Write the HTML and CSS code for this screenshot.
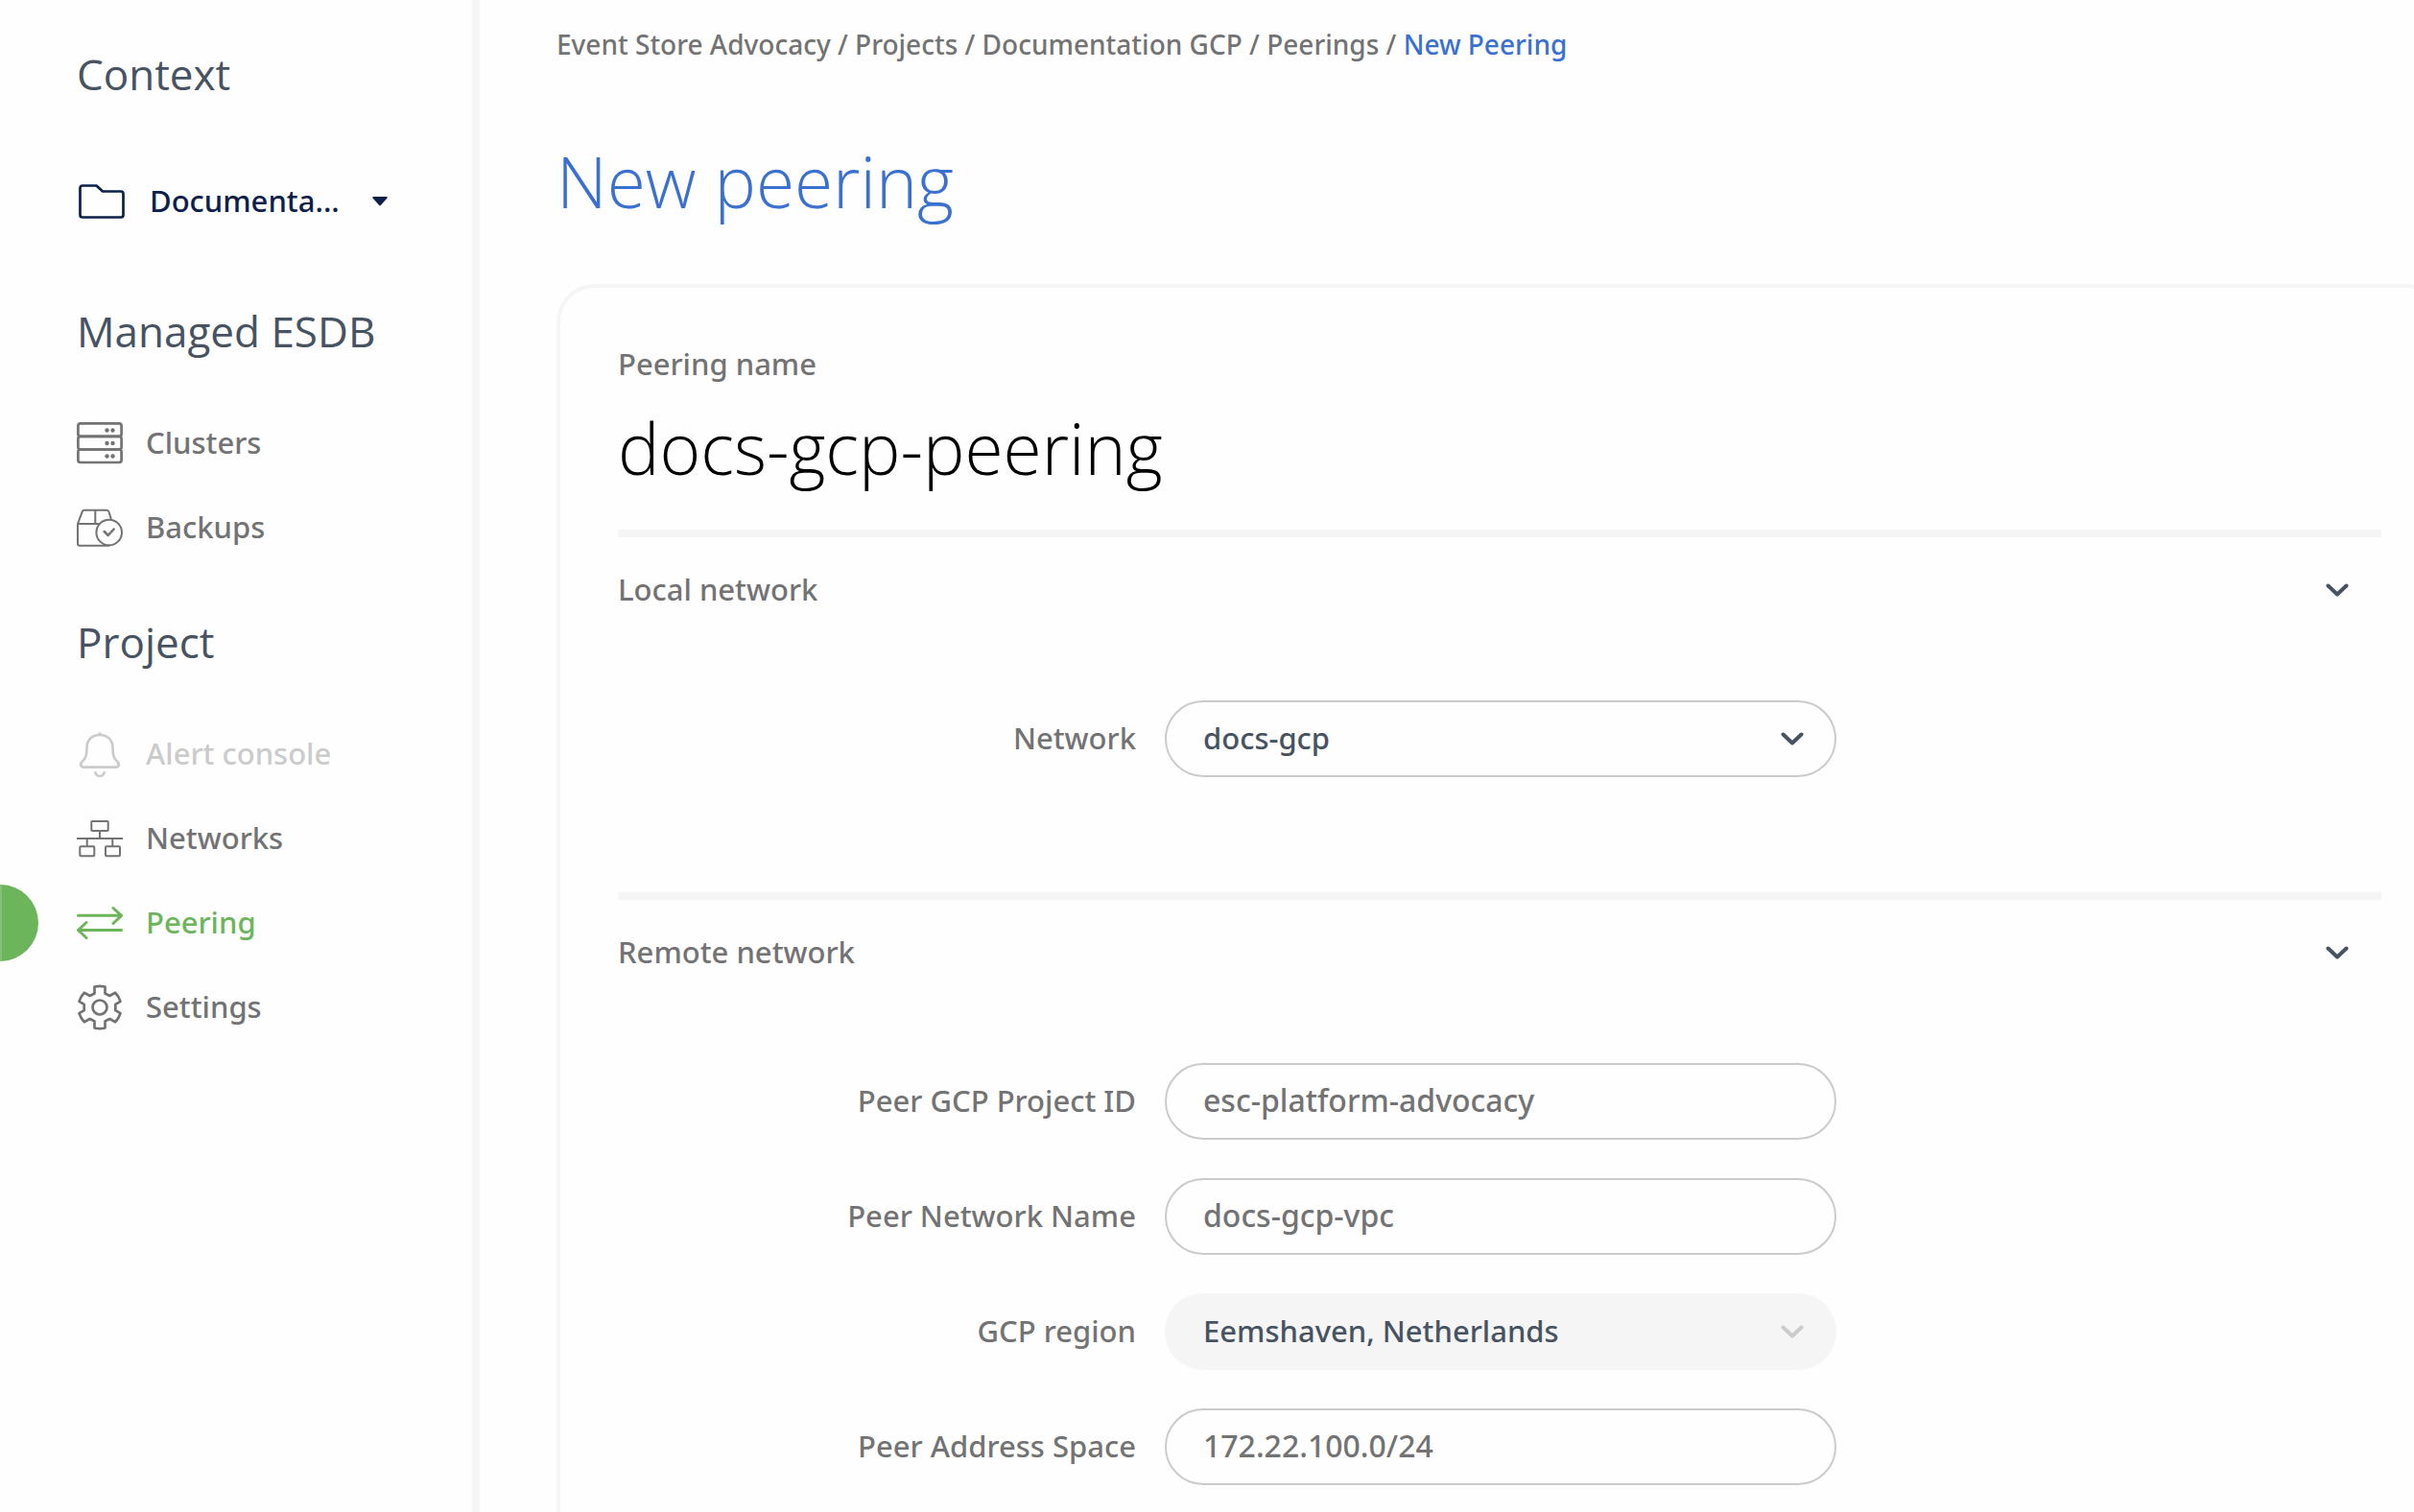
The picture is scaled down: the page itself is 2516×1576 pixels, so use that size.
FILE: index.html
```html
<!DOCTYPE html>
<html lang="en">
<head>
<meta charset="utf-8">
<meta name="viewport" content="width=device-width, initial-scale=1">
<title>New peering</title>
<link rel="stylesheet" href="styles.css">
</head>
<body>
<div class="app">
  <aside class="sidebar">
    <section class="nav-group">
      <h2 class="nav-heading">Context</h2>
      <button class="context-button" type="button">
        <svg class="icon" viewBox="0 0 48 48" aria-hidden="true"><path d="M4 7.5H18.5L25 13.5H44Q46.500 13.500 46.500 16V38Q46.500 40.500 44 40.500H4Q1.500 40.500 1.500 38V10Q1.500 7.500 4 7.500Z" stroke-width="2.700"/></svg>
        <span class="nav-label">Documenta...</span>
        <svg class="caret" viewBox="0 0 16 10" aria-hidden="true"><path d="M1.500 0H14.500Q16.500 .3 15.300 1.800L9 8.800Q8 9.800 7 8.800L.7 1.800Q-.5 .3 1.500 0Z"/></svg>
      </button>
    </section>

    <nav class="nav-group" aria-labelledby="managed">
      <h2 class="nav-heading" id="managed">Managed ESDB</h2>
      <a class="nav-item" href="#clusters">
        <svg class="icon" viewBox="0 0 48 48" aria-hidden="true"><g stroke-width="2.700"><rect x="1.400" y="3.400" width="45.200" height="13.400" rx="2.500"/><rect x="1.400" y="16.800" width="45.200" height="13.700" rx="2.500"/><rect x="1.400" y="30.500" width="45.200" height="13.500" rx="2.500"/></g><g class="solid"><circle cx="31.500" cy="10.500" r="2.200"/><circle cx="37.500" cy="10.500" r="2.200"/><circle cx="31.500" cy="24" r="2.200"/><circle cx="37.500" cy="24" r="2.200"/><circle cx="31.500" cy="37.500" r="2.200"/><circle cx="37.500" cy="37.500" r="2.200"/></g></svg>
        <span class="nav-label">Clusters</span>
      </a>
      <a class="nav-item" href="#backups">
        <svg class="icon" viewBox="0 0 48 48" aria-hidden="true"><g stroke-width="2"><path d="M35.800 15L33.500 7.500Q33 5.700 31 5.700H8Q6.300 5.700 5.700 7.300L1 20V40.500Q1 42.700 3.200 42.700H33.700M1 20H23M19.300 5.700V20"/><circle cx="33.700" cy="29" r="13.300"/></g><path d="M28.700 28L32.700 32L38.700 25.500" stroke-width="2.500"/></svg>
        <span class="nav-label">Backups</span>
      </a>
    </nav>

    <nav class="nav-group" aria-labelledby="project">
      <h2 class="nav-heading" id="project">Project</h2>
      <a class="nav-item nav-item--muted" href="#alerts">
        <svg class="icon" viewBox="0 0 48 48" aria-hidden="true"><path d="M24 1.500V4M24 4C15.500 4 10.500 10 10.500 17.500C10.500 26 9 28.500 5.500 32C3 34.500 4.200 37.700 7.500 37.700H40.500C43.800 37.700 45 34.500 42.500 32C39 28.500 37.500 26 37.500 17.500C37.500 10 32.500 4 24 4ZM19.300 42.300A4.700 4.700 0 0 0 28.700 42.300" stroke-width="2.700" stroke-linecap="butt"/></svg>
        <span class="nav-label">Alert console</span>
      </a>
      <a class="nav-item" href="#networks">
        <svg class="icon" viewBox="0 0 48 48" aria-hidden="true"><g stroke-width="2"><rect x="15.300" y="6" width="17.400" height="10" rx="1"/><rect x="3.300" y="32.300" width="15" height="10" rx="1"/><rect x="30" y="32.300" width="15" height="10" rx="1"/><path d="M24 16V24M0 24H48M10.700 24V32M37.300 24V32"/></g></svg>
        <span class="nav-label">Networks</span>
      </a>
      <a class="nav-item nav-item--active" href="#peering" aria-current="page">
        <svg class="icon" viewBox="0 0 48 48" aria-hidden="true"><path d="M1.500 16.300H46.500M38 8.500L46.500 16.300L38 24.500M46.500 31.500H1.500M10 23.500L1.500 31.500L10 39.500" stroke-width="3"/></svg>
        <span class="nav-label">Peering</span>
      </a>
      <a class="nav-item" href="#settings">
        <svg class="icon" viewBox="0 0 48 48" aria-hidden="true"><g stroke-width="2.700"><path d="M18.500 2.500Q24 1.300 29.500 2.500V9.500L34.300 12L40.200 8.800Q44 12.800 45.500 17.800L40.300 20.800V27.200L45.500 30.200Q44 35.200 40.200 39.200L34.300 36L29.500 38.500V45.500Q24 46.700 18.500 45.500V38.500L13.700 36L7.800 39.200Q4 35.200 2.500 30.200L7.700 27.200V20.800L2.500 17.800Q4 12.800 7.800 8.800L13.700 12L18.500 9.500Z"/><circle cx="24" cy="24" r="7.500"/></g></svg>
        <span class="nav-label">Settings</span>
      </a>
    </nav>
  </aside>

  <main class="main">
    <nav class="breadcrumb" aria-label="Breadcrumb">
      <a href="#org">Event Store Advocacy</a> / <a href="#projects">Projects</a> / <a href="#docs">Documentation GCP</a> / <a href="#peerings">Peerings</a> / <a class="current" href="#new">New Peering</a>
    </nav>
    <h1 class="title">New peering</h1>

    <form class="card">
      <div class="name-block">
        <label class="name-label" for="name">Peering name</label>
        <input class="name-input" id="name" type="text" value="docs-gcp-peering">
      </div>

      <section class="section">
        <button class="section-toggle" type="button">
          <span class="section-title">Local network</span>
          <svg class="chevron" viewBox="0 0 24 14" aria-hidden="true"><path d="M2.500 2.500L12 11.500L21.500 2.500"/></svg>
        </button>
        <div class="fields">
          <div class="field">
            <label class="field-label" for="network">Network</label>
            <div class="select-wrap">
              <select class="control control--select" id="network"><option>docs-gcp</option></select>
              <svg class="chevron" viewBox="0 0 24 14" aria-hidden="true"><path d="M2.500 2.500L12 11.500L21.500 2.500"/></svg>
            </div>
          </div>
        </div>
      </section>

      <section class="section">
        <button class="section-toggle" type="button">
          <span class="section-title">Remote network</span>
          <svg class="chevron" viewBox="0 0 24 14" aria-hidden="true"><path d="M2.500 2.500L12 11.500L21.500 2.500"/></svg>
        </button>
        <div class="fields">
          <div class="field">
            <label class="field-label" for="project-id">Peer GCP Project ID</label>
            <input class="control" id="project-id" type="text" value="esc-platform-advocacy">
          </div>
          <div class="field">
            <label class="field-label" for="network-name">Peer Network Name</label>
            <input class="control" id="network-name" type="text" value="docs-gcp-vpc">
          </div>
          <div class="field">
            <label class="field-label" for="region">GCP region</label>
            <div class="select-wrap">
              <select class="control control--select" id="region" disabled><option>Eemshaven, Netherlands</option></select>
              <svg class="chevron chevron--muted" viewBox="0 0 24 14" aria-hidden="true"><path d="M2.500 2.500L12 11.500L21.500 2.500"/></svg>
            </div>
          </div>
          <div class="field">
            <label class="field-label" for="address">Peer Address Space</label>
            <input class="control" id="address" type="text" value="172.22.100.0/24">
          </div>
        </div>
      </section>
    </form>
  </main>
</div>
</body>
</html>
```
FILE: styles.css
```css
:root {
  --text: #737373;
  --slate: #475361;
  --navy: #0d2049;
  --blue: #3a70d0;
  --green: #6cb55b;
  --muted: #cbcbcb;
  --line: #f5f5f5;
}

*,
*::before {
  box-sizing: border-box;
}

body {
  margin: 0;
  background: #fefefe;
  color: var(--text);
  font: 500 31px/44px "Noto Sans", "Open Sans", sans-serif;
}

button,
input,
select {
  margin: 0;
  border: 0;
  background: none;
  color: inherit;
  font: inherit;
}

a {
  color: inherit;
  text-decoration: none;
}

.app {
  display: flex;
  height: 100vh;
  overflow: hidden;
}

/* Sidebar */

.sidebar {
  flex: 0 0 500px;
  padding-top: 47px;
  border-right: 8px solid var(--line);
}

.nav-group {
  margin-bottom: 45px;
}

.nav-heading {
  margin: 0 0 43px;
  padding-left: 80px;
  color: var(--slate);
  font-family: "Open Sans", sans-serif;
  font-size: 44px;
  font-weight: 400;
  line-height: 60px;
}

.nav-item,
.context-button {
  display: flex;
  align-items: center;
  gap: 24px;
  height: 88px;
  padding: 0 0 0 80px;
}

.context-button {
  gap: 26px;
  height: 120px;
  padding-left: 82px;
  color: var(--navy);
}

.nav-label,
.section-title {
  padding-bottom: 2px;
}

.nav-item--muted {
  color: var(--muted);
}

.nav-item--active {
  position: relative;
  color: var(--green);
}

.nav-item--active::before {
  content: "";
  position: absolute;
  top: 4px;
  left: 0;
  width: 40px;
  height: 80px;
  border-left: 2px solid #84c176;
  border-radius: 0 40px 40px 0;
  background: var(--green);
}

.icon {
  flex: none;
  width: 48px;
  height: 48px;
  fill: none;
  stroke: currentColor;
  stroke-linecap: round;
  stroke-linejoin: round;
}

.icon .solid {
  fill: currentColor;
  stroke: none;
}

.caret {
  width: 16px;
  height: 10px;
  margin-left: 8px;
  fill: currentColor;
}

/* Main column */

.main {
  flex: 1;
  min-width: 0;
  padding: 26px 0 0 80px;
}

.breadcrumb {
  font-size: 28px;
  line-height: 40px;
}

.breadcrumb .current {
  color: var(--blue);
}

.title {
  margin: 75px 0 59px;
  color: var(--blue);
  font-family: "Open Sans", sans-serif;
  font-size: 73px;
  font-weight: 300;
  line-height: 96px;
}

.card {
  margin-right: -30px;
  padding: 57px 60px 60px;
  border: 4px solid var(--line);
  border-radius: 40px;
}

.name-block {
  display: flex;
  flex-direction: column;
  gap: 18px;
  padding-bottom: 37px;
}

.name-input {
  width: 100%;
  height: 96px;
  padding: 0;
  color: #000;
  font-family: "Open Sans", sans-serif;
  font-size: 73px;
  font-weight: 300;
  line-height: 96px;
}

.section {
  border-top: 8px solid var(--line);
  padding-bottom: 120px;
}

.section-toggle {
  display: flex;
  align-items: center;
  justify-content: space-between;
  width: 100%;
  height: 110px;
  padding: 0 34px 0 0;
}

.chevron {
  width: 24px;
  height: 14px;
  fill: none;
  stroke: var(--slate);
  stroke-width: 4;
  stroke-linecap: round;
  stroke-linejoin: round;
}

.chevron--muted {
  stroke: var(--muted);
}

.fields {
  display: grid;
  gap: 40px;
  padding: 60px 0 0 2px;
}

.field {
  display: grid;
  grid-template-columns: 1fr 700px 1fr;
  align-items: center;
  gap: 30px;
}

.field-label {
  padding-bottom: 2px;
  text-align: right;
}

.control {
  width: 100%;
  height: 80px;
  padding: 0 38px 3px;
  border: 2px solid var(--muted);
  border-radius: 40px;
  font-size: 32px;
}

.control--select {
  grid-area: 1 / 1;
  appearance: none;
  color: var(--slate);
  font-size: 31px;
  opacity: 1;
}

.control--select:disabled {
  border-color: var(--line);
  background: var(--line);
}

.select-wrap {
  display: grid;
  align-items: center;
}

.select-wrap .chevron {
  grid-area: 1 / 1;
  justify-self: end;
  margin-right: 34px;
  pointer-events: none;
}
```
